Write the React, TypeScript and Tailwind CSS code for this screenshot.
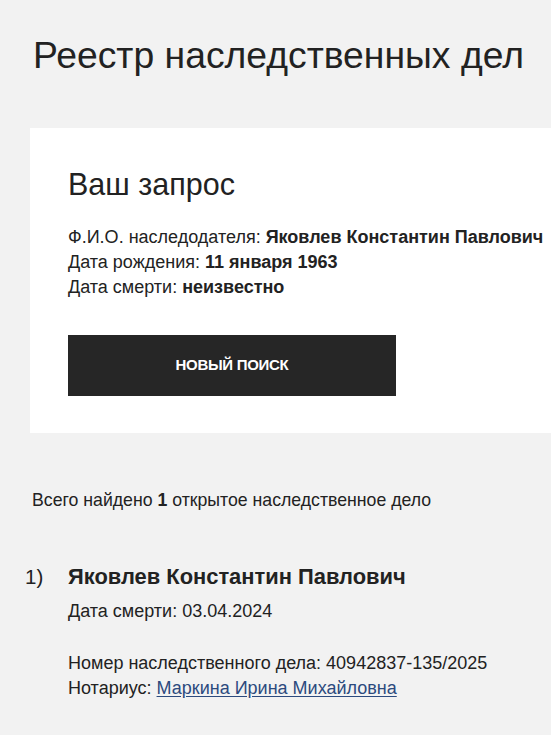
export default function App() {
  return (
    <div
      className="min-h-[735px] w-full overflow-hidden bg-[#f2f2f2] text-[#222222]"
      style={{ fontFamily: '"Liberation Sans", Arial, sans-serif' }}
    >
      <h1 className="pl-[33px] pt-[34px] text-[37.3px] leading-[42px] font-normal whitespace-nowrap">
        Реестр наследственных дел
      </h1>
      <div className="ml-[30px] mt-[52px] w-[600px] bg-white pl-[38px] pt-[40px] pb-[37px]">
        <h2 className="text-[30.5px] leading-[32px] font-normal">Ваш запрос</h2>
        <div className="mt-[25px] text-[18px] leading-[25px] whitespace-nowrap">
          <div>
            Ф.И.О. наследодателя: <b>Яковлев Константин Павлович</b>
          </div>
          <div>
            Дата рождения: <b>11 января 1963</b>
          </div>
          <div>
            Дата смерти: <b>неизвестно</b>
          </div>
        </div>
        <button className="mt-[35px] flex h-[61px] w-[328px] items-center justify-center bg-[#262626] text-[15px] font-bold tracking-[-0.3px] text-white">
          НОВЫЙ ПОИСК
        </button>
      </div>
      <p className="mt-[55px] pl-[32px] text-[17.7px] leading-[25px] whitespace-nowrap">
        Всего найдено <b>1</b> открытое наследственное дело
      </p>
      <div className="mt-[50px] flex pl-[25px]">
        <div className="w-[43px] text-[20.5px] leading-[28px]">1)</div>
        <div>
          <div className="text-[21.9px] leading-[28px] font-bold whitespace-nowrap">
            Яковлев Константин Павлович
          </div>
          <div className="mt-[8px] text-[18px] leading-[25px] whitespace-nowrap">Дата смерти: 03.04.2024</div>
          <div className="mt-[27px] text-[18px] leading-[25px] whitespace-nowrap">
            Номер наследственного дела: 40942837-135/2025
          </div>
          <div className="text-[18px] leading-[25px] whitespace-nowrap">
            Нотариус:{" "}
            <a href="#" className="text-[#2c4a7e] underline underline-offset-2">
              Маркина Ирина Михайловна
            </a>
          </div>
        </div>
      </div>
    </div>
  );
}
